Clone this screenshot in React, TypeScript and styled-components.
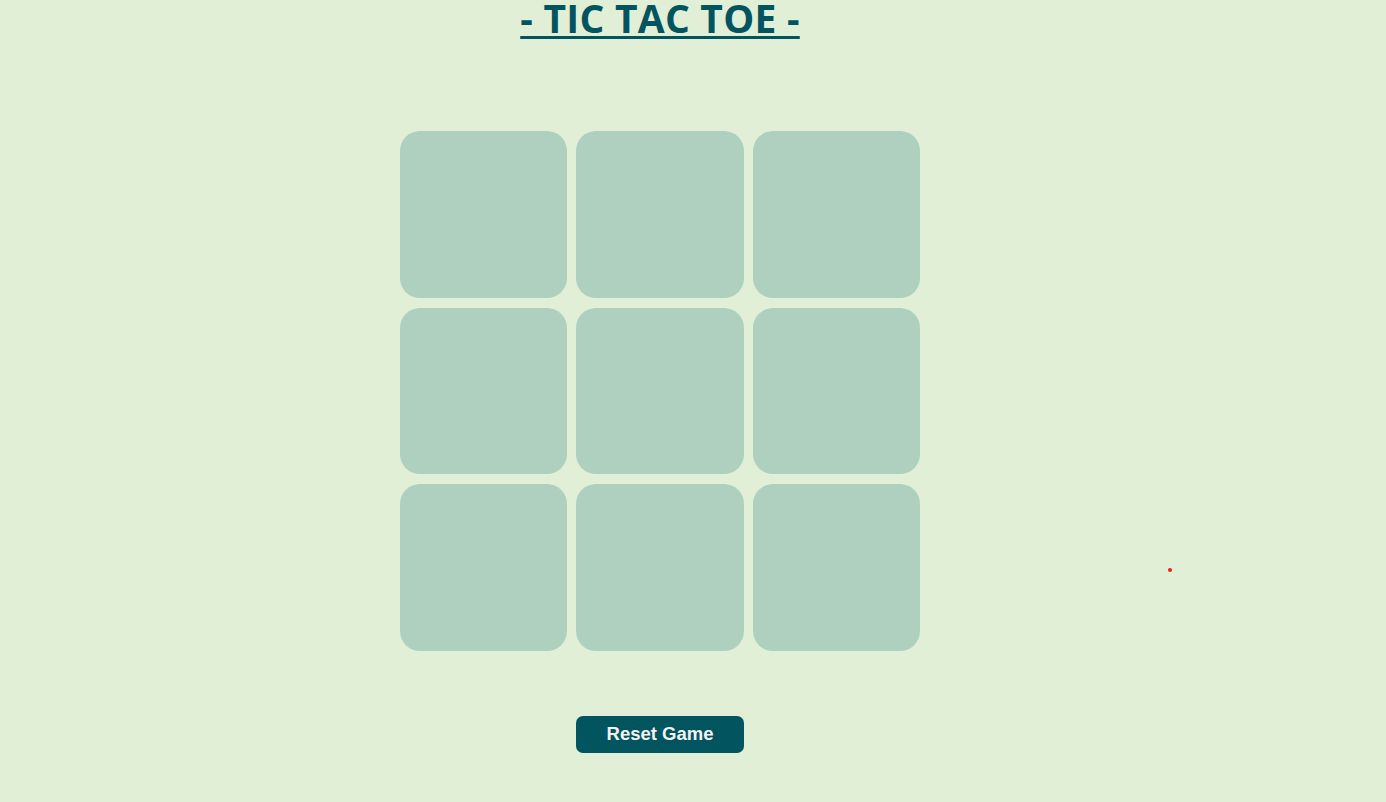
import React from "react";
import styled, { createGlobalStyle } from "styled-components";

const Global = createGlobalStyle`
  html, body { margin: 0; padding: 0; background: #e1efd6; }
  body { font-family: "Liberation Sans", Arial, sans-serif; }
`;

const Page = styled.main`
  width: 1320px;
  min-height: 802px;
  display: flex;
  flex-direction: column;
  align-items: center;
  position: relative;
`;

const Title = styled.h1`
  margin: 0;
  font-family: "Open Sans", "DejaVu Sans", sans-serif;
  font-weight: 700;
  font-size: 39px;
  line-height: 36px;
  padding-bottom: 6px;
  letter-spacing: 0.25px;
  color: #02545f;
  text-decoration: underline;
  text-decoration-thickness: 3px;
  text-underline-offset: 3px;
  white-space: pre;
`;

const Board = styled.div`
  margin-top: 89px;
  width: 520px;
  display: grid;
  grid-template-columns: repeat(3, 1fr);
  gap: 10px 9px;
`;

const Cell = styled.button`
  height: 166.5px;
  border: none;
  border-radius: 20px;
  background: #afd0bf;
  padding: 0;
  cursor: pointer;
`;

const ResetButton = styled.button`
  margin-top: 65px;
  width: 168px;
  height: 37px;
  border: none;
  border-radius: 7px;
  background: #02545f;
  color: #f3f3f3;
  font-family: "Liberation Sans", Arial, sans-serif;
  font-weight: 700;
  font-size: 18.5px;
  cursor: pointer;
`;

const Dot = styled.span`
  position: absolute;
  left: 1168px;
  top: 568px;
  width: 4px;
  height: 4px;
  border-radius: 50%;
  background: #ee1c1c;
`;

export default function App() {
  return (
    <>
      <Global />
      <Page>
        <Title>- TIC TAC TOE -</Title>
        <Board>
          {Array.from({ length: 9 }).map((_, i) => (
            <Cell key={i} aria-label={`cell ${i + 1}`} />
          ))}
        </Board>
        <ResetButton>Reset Game</ResetButton>
        <Dot />
      </Page>
    </>
  );
}
